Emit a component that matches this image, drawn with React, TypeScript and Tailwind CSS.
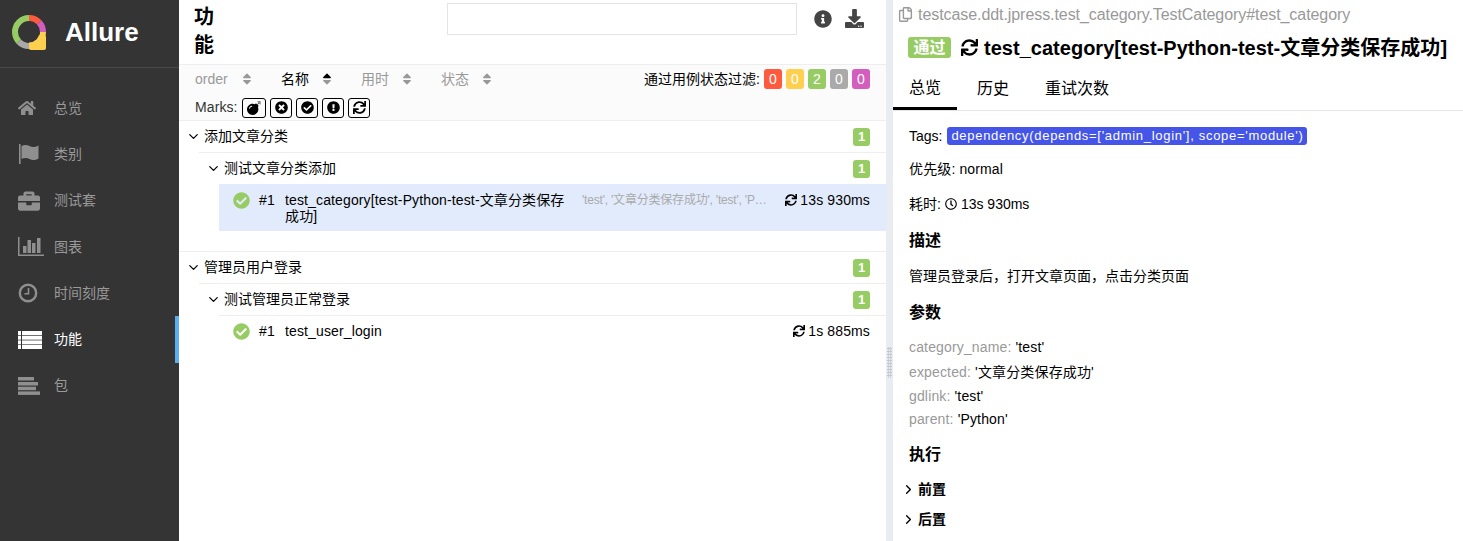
import { ChevronDown, ChevronRight } from 'lucide-react';
import {
  FaBomb,
  FaBriefcase,
  FaCheckCircle,
  FaDownload,
  FaExclamationCircle,
  FaHome,
  FaInfoCircle,
  FaRegClock,
  FaRegCopy,
  FaSortDown,
  FaSortUp,
  FaSync,
  FaTimesCircle,
} from 'react-icons/fa';

const font = "font-['Liberation_Sans','Noto_Sans_CJK_SC',sans-serif]";

function FlagIcon() {
  return (
    <svg width="24" height="20" viewBox="0 0 24 20" fill="currentColor">
      <rect x="1" y="0" width="1.6" height="20" />
      <path d="M3.5 2c3-1.6 5.5-1.2 8 0s5 1.400 9-.6v13c-3.500 2-6.500 1.800-9 .6s-5-1.400-8 0z" />
    </svg>
  );
}

function ChartIcon() {
  return (
    <svg width="26" height="20" viewBox="0 0 26 20" fill="currentColor">
      <path d="M0 0h1.500v17.500H26V19H0z" />
      <rect x="5" y="9" width="3.500" height="7" />
      <rect x="9.500" y="3" width="3.500" height="13" />
      <rect x="14" y="6" width="3.500" height="10" />
      <rect x="19" y="1" width="3.500" height="15" />
    </svg>
  );
}

function ClockIcon() {
  return (
    <svg width="20" height="20" viewBox="0 0 20 20" fill="none" stroke="currentColor">
      <circle cx="10" cy="10" r="8.200" strokeWidth="2.400" />
      <path d="M10.500 5v5.700H6.500" strokeWidth="1.600" />
    </svg>
  );
}

function ListIcon() {
  return (
    <svg width="24" height="18" viewBox="0 0 24 18" fill="currentColor">
      <rect x="0" y="0" width="24" height="4" />
      <rect x="0" y="4.700" width="24" height="4" />
      <rect x="0" y="9.400" width="24" height="4" />
      <rect x="0" y="14" width="24" height="4" />
      <rect x="3" y="0" width="1" height="18" fill="#343434" />
    </svg>
  );
}

function PackageIcon() {
  return (
    <svg width="22" height="18" viewBox="0 0 22 18" fill="currentColor">
      <rect x="0" y="0" width="16" height="3.500" />
      <rect x="0" y="5" width="20" height="3.500" />
      <rect x="0" y="9.700" width="18" height="3.500" />
      <rect x="0" y="14.400" width="22" height="3.500" />
    </svg>
  );
}

const navItems = [
  { label: '总览', icon: <FaHome size={18} /> },
  { label: '类别', icon: <FlagIcon /> },
  { label: '测试套', icon: <FaBriefcase size={22} /> },
  { label: '图表', icon: <ChartIcon /> },
  { label: '时间刻度', icon: <ClockIcon /> },
  { label: '功能', icon: <ListIcon />, active: true },
  { label: '包', icon: <PackageIcon /> },
];

const statusBadges = [
  { n: 0, cls: 'bg-[#fd5a3e]' },
  { n: 0, cls: 'bg-[#ffd050]' },
  { n: 2, cls: 'bg-[#97cc64]' },
  { n: 0, cls: 'bg-[#aaaaaa]' },
  { n: 0, cls: 'bg-[#d35ebe]' },
];

const params = [
  { k: 'category_name', v: "'test'", h: 'h-[25px]' },
  { k: 'expected', v: "'文章分类保存成功'", h: 'h-[24px]' },
  { k: 'gdlink', v: "'test'", h: 'h-[24px]' },
  { k: 'parent', v: "'Python'", h: 'h-[22px]' },
];

function Logo() {
  return (
    <svg width="36" height="36" viewBox="0 0 36 36" className="shrink-0">
      <rect x="17" y="20" width="17" height="15" rx="2" fill="#ffd050" />
      <circle cx="17" cy="17" r="10.500" fill="#343434" />
      <g fill="none" strokeWidth="6" transform="rotate(-90 17 17)">
        <circle cx="17" cy="17" r="14" pathLength="100" stroke="#fd5a3e" strokeDasharray="13 87" />
        <circle cx="17" cy="17" r="14" pathLength="100" stroke="#d35ebe" strokeDasharray="12 88" strokeDashoffset="-13" />
        <circle cx="17" cy="17" r="14" pathLength="100" stroke="#ffd050" strokeDasharray="25 75" strokeDashoffset="-25" />
        <circle cx="17" cy="17" r="14" pathLength="100" stroke="#aaaaaa" strokeDasharray="13 87" strokeDashoffset="-50" />
        <circle cx="17" cy="17" r="14" pathLength="100" stroke="#97cc64" strokeDasharray="37 63" strokeDashoffset="-63" />
      </g>
    </svg>
  );
}

function Sidebar() {
  return (
    <aside className="flex w-[179px] shrink-0 flex-col bg-[#343434]">
      <div className="flex h-[68px] items-center border-b border-[#4a4a4a] pb-[2px] pl-[12px]">
        <Logo />
        <span className="ml-[17px] text-[26px] font-bold text-white">Allure</span>
      </div>
      <nav className="pt-[17px]">
        {navItems.map(item => (
          <div
            key={item.label}
            className={`flex h-[46.300px] items-center border-r-4 pl-[18px] text-[14px] ${item.active ? 'border-[#5baef0] text-white' : 'border-transparent text-[#999999]'}`}
          >
            <span className={`flex w-[36px] items-center ${item.active ? 'text-white' : 'text-[#8f8f8f]'}`}>
              {item.icon}
            </span>
            {item.label}
          </div>
        ))}
      </nav>
    </aside>
  );
}

function SortItem({ label, width, gap, active }: { label: string; width: string; gap: string; active?: boolean }) {
  return (
    <div className={`flex items-center ${width} ${active ? 'text-black' : 'text-[#999999]'}`}>
      <span>{label}</span>
      <span className={`grid ${gap}`}>
        <FaSortDown size={14} className="col-start-1 row-start-1 text-[#999999]" />
        <FaSortUp size={14} className={`col-start-1 row-start-1 ${active ? 'text-black' : 'text-[#999999]'}`} />
      </span>
    </div>
  );
}

function Badge({ n, cls }: { n: number; cls: string }) {
  return (
    <span className={`flex h-[20px] w-[18px] items-center justify-center rounded-[3px] text-[14px] text-white ${cls}`}>{n}</span>
  );
}

function GroupRow({ label }: { label: string }) {
  return (
    <div className="flex h-[31px] items-center justify-between pl-[7px] pr-[16px] text-[14px] text-black">
      <span className="flex items-center gap-[3px]">
        <ChevronDown size={15} strokeWidth={2} />
        {label}
      </span>
      <span className="flex h-[18px] w-[17px] items-center justify-center rounded-[3px] bg-[#97cc64] text-[13px] font-bold text-white">1</span>
    </div>
  );
}

function TestRow({ name, time, params, selected }: { name: string; time: string; params?: string; selected?: boolean }) {
  return (
    <div className={`flex items-start pl-[14px] pr-[16px] text-[14px] leading-[16px] tracking-[0.13px] text-black ${selected ? 'h-[47px] bg-[#e2ebfb] pt-[8px]' : 'h-[31px] pt-[7px]'}`}>
      <FaCheckCircle size={17} className="shrink-0 text-[#97cc64]" />
      <span className="ml-[9px] w-[26px] shrink-0">#1</span>
      <span className="w-[281px] shrink-0">{name}</span>
      <span className="ml-[16px] w-[188px] shrink-0 truncate text-[12px] tracking-[-0.2px] text-[#aaaaaa]">{params}</span>
      <span className="ml-auto flex items-center gap-[3px] whitespace-nowrap">
        <FaSync size={12} />
        {time}
      </span>
    </div>
  );
}

function MarkButton({ children, width, className }: { children: React.ReactNode; width: string; className?: string }) {
  return (
    <span className={`flex h-[20px] items-center justify-center rounded-[3px] border border-black text-black ${width} ${className ?? ''}`}>
      {children}
    </span>
  );
}

function MiddlePanel() {
  return (
    <section className="flex w-[707px] shrink-0 flex-col bg-white">
      <header className="flex h-[65px] items-start border-b border-[#eeeeee] pl-[15px]">
        <h2 className="mt-[3px] w-[253px] text-[20px] font-bold leading-[28px] text-black">
          功<br />能
        </h2>
        <div className="mt-[3px] h-[32px] w-[350px] border border-[#e4e4e4]" />
        <FaInfoCircle size={18} className="ml-[17px] mt-[10px] text-[#454545]" />
        <FaDownload size={19} className="ml-[13px] mt-[9px] text-[#454545]" />
      </header>
      <div className="flex h-[56px] flex-col border-b border-[#eeeeee] bg-[#fbfbfb] px-[16px] text-[14px]">
        <div className="flex h-[28px] items-center justify-between">
          <div className="flex">
            <SortItem label="order" width="w-[86px]" gap="ml-[12px]" />
            <SortItem label="名称" width="w-[80px]" gap="ml-[11px]" active />
            <SortItem label="用时" width="w-[80px]" gap="ml-[11px]" />
            <SortItem label="状态" width="w-[80px]" gap="ml-[11px]" />
          </div>
          <div className="flex items-center gap-[4px] text-black">
            <span>通过用例状态过滤:</span>
            {statusBadges.map((b, i) => (
              <Badge key={i} n={b.n} cls={b.cls} />
            ))}
          </div>
        </div>
        <div className="mt-[4px] flex items-center text-[#333333]">
          <span className="w-[47px] tracking-[0.1px]">Marks:</span>
          <MarkButton width="w-[24px]"><FaBomb size={14} /></MarkButton>
          <MarkButton width="w-[22px]" className="ml-[4px]"><FaTimesCircle size={13} /></MarkButton>
          <MarkButton width="w-[22px]" className="ml-[4px]"><FaCheckCircle size={13} /></MarkButton>
          <MarkButton width="w-[22px]" className="ml-[4px]"><FaExclamationCircle size={13} /></MarkButton>
          <MarkButton width="w-[22px]" className="ml-[4px]"><FaSync size={13} /></MarkButton>
        </div>
      </div>
      <div>
        <GroupRow label="添加文章分类" />
        <div className="ml-[20px] border-t border-[#eeeeee]">
          <GroupRow label="测试文章分类添加" />
        </div>
        <div className="ml-[40px]">
          <TestRow
            selected
            name="test_category[test-Python-test-文章分类保存成功]"
            params="'test', '文章分类保存成功', 'test', 'Python'"
            time="13s 930ms"
          />
        </div>
      </div>
      <div className="mt-[20px] border-t border-[#eeeeee]">
        <GroupRow label="管理员用户登录" />
        <div className="ml-[20px] border-t border-[#eeeeee]">
          <GroupRow label="测试管理员正常登录" />
        </div>
        <div className="ml-[40px] border-t border-[#eeeeee]">
          <TestRow name="test_user_login" time="1s 885ms" />
        </div>
      </div>
    </section>
  );
}

function DetailHeading({ children }: { children: React.ReactNode }) {
  return <h3 className="pl-[16px] text-[16px] font-bold leading-[20px] text-black">{children}</h3>;
}

function DetailPanel() {
  return (
    <section className="flex min-w-0 flex-1 flex-col bg-white text-[14px] text-black">
      <div className="flex h-[28px] items-center pl-[5px] pt-[1px] text-[16px] tracking-[-0.07px] text-[#999999]">
        <FaRegCopy size={15} className="mr-[5px]" />
        testcase.ddt.jpress.test_category.TestCategory#test_category
      </div>
      <div className="flex h-[40px] items-center whitespace-nowrap pb-[1px] pl-[15px]">
        <span className="flex h-[21px] w-[43px] items-center justify-center rounded-[3px] bg-[#97cc64] text-[16px] font-bold text-white">通过</span>
        <FaSync size={17} className="ml-[10px]" />
        <span className="ml-[6px] text-[20px] font-bold tracking-[0.02px]">test_category[test-Python-test-文章分类保存成功]</span>
      </div>
      <div className="flex h-[43px] border-b border-[#e5e5e5] text-[16px]">
        <span className="flex w-[64px] items-center justify-center border-b-[3px] border-black">总览</span>
        <span className="ml-[20px] flex items-center">历史</span>
        <span className="ml-[36px] flex items-center">重试次数</span>
      </div>
      <div className="flex h-[49px] items-center pl-[16px] pt-[1px]">
        Tags:
        <span className="ml-[5px] flex h-[18px] w-[360px] items-center justify-center rounded-[3px] bg-[#4455e8] text-[13px] tracking-[0.7px] text-white">
          dependency(depends=['admin_login'], scope='module')
        </span>
      </div>
      <div className="flex h-[18px] items-center pl-[16px] tracking-[0.13px]">优先级: normal</div>
      <div className="mt-[17px] flex h-[18px] items-center pl-[16px]">
        耗时:
        <FaRegClock size={12} className="mx-[4px]" />
        13s 930ms
      </div>
      <div className="mt-[18px]"><DetailHeading>描述</DetailHeading></div>
      <p className="mt-[16px] pl-[16px] leading-[18px]">管理员登录后，打开文章页面，点击分类页面</p>
      <div className="mt-[18px]"><DetailHeading>参数</DetailHeading></div>
      <div className="mt-[12px] pl-[16px] tracking-[0.15px]">
        {params.map(p => (
          <div key={p.k} className={`flex items-center ${p.h}`}>
            <span className="text-[#999999]">{p.k}:</span>
            <span className="ml-[4px]">{p.v}</span>
          </div>
        ))}
      </div>
      <div className="mt-[15px]"><DetailHeading>执行</DetailHeading></div>
      <div className="mt-[14px] flex h-[20px] items-center pl-[8px] font-bold">
        <ChevronRight size={15} strokeWidth={2.200} className="mr-[2px]" />前置
      </div>
      <div className="mt-[10px] flex h-[20px] items-center pl-[8px] font-bold">
        <ChevronRight size={15} strokeWidth={2.200} className="mr-[2px]" />后置
      </div>
    </section>
  );
}

export default function App() {
  return (
    <div className={`flex h-screen overflow-hidden bg-white ${font}`}>
      <Sidebar />
      <MiddlePanel />
      <div className="flex w-[7px] shrink-0 justify-center bg-[#e9edf2] pt-[347px]">
        <div className="h-[31px] w-[5px] bg-[radial-gradient(#c4c8cc_1px,transparent_1px)] bg-[length:2.5px_3px]" />
      </div>
      <DetailPanel />
    </div>
  );
}
